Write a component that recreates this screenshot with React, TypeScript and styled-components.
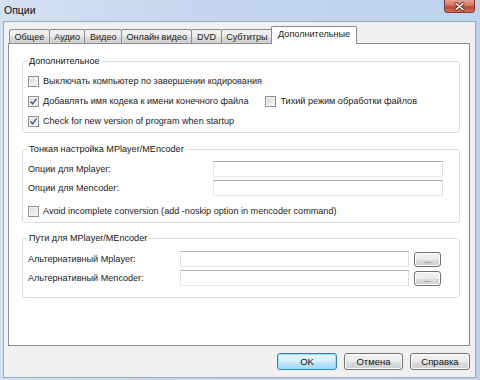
import styled, { createGlobalStyle } from 'styled-components'

const uiFont = '"Liberation Sans", "DejaVu Sans", sans-serif'
const textSize = '9.1px'

const GlobalStyle = createGlobalStyle`
  html, body {
    margin: 0;
    padding: 0;
    background: #bcd3ec;
  }
  body {
    font-family: ${uiFont};
    font-size: ${textSize};
    color: #1b1b1b;
  }
`

const Window = styled.div`
  width: 480px;
  height: 380px;
  display: flex;
  flex-direction: column;
  background: linear-gradient(90deg, #d3e1f2 0%, #c4d7ee 40%, #bdd3ec 100%);
  box-sizing: border-box;
  overflow: hidden;
`

const TitleBar = styled.div`
  height: 21px;
  display: flex;
  align-items: flex-start;
  justify-content: space-between;
  padding: 0 5px 0 4px;
`

const Title = styled.div`
  margin-top: 4px;
  font-size: 10.5px;
  color: #0d0d0d;
`

const CloseButton = styled.div`
  width: 31px;
  height: 13px;
  border: 1px solid #7a3a36;
  border-top: none;
  border-radius: 0 0 4px 4px;
  background: linear-gradient(#e4a293 0%, #d7765f 45%, #c04a33 55%, #d0705a 100%);
  display: flex;
  align-items: center;
  justify-content: center;
  box-sizing: border-box;
`

const Client = styled.div`
  flex: 1;
  margin: 0 4px 2px 3px;
  background: #f0f0f0;
  border: 1px solid #9aaabd;
  display: flex;
  flex-direction: column;
  padding: 4px 5px 0 4px;
`

const TabStrip = styled.div`
  display: flex;
  align-items: flex-end;
  height: 18px;
  padding-left: 1px;
  position: relative;
  z-index: 1;
  margin-bottom: -1px;
`

const Tab = styled.div<{ active?: boolean }>`
  height: ${(p) => (p.active ? '18px' : '15px')};
  padding: 0 ${(p) => (p.active ? '6px' : '4.5px')};
  padding-top: ${(p) => (p.active ? '2px' : '0')};
  box-sizing: border-box;
  border: 1px solid #898c95;
  border-bottom: ${(p) => (p.active ? 'none' : '1px solid #898c95')};
  margin-left: ${(p) => (p.active ? '-2px' : '-1px')};
  background: ${(p) =>
    p.active
      ? '#ffffff'
      : 'linear-gradient(#f3f3f3 0%, #ebebeb 50%, #dddddd 51%, #cfcfcf 100%)'};
  border-radius: 2px 2px 0 0;
  display: flex;
  align-items: ${(p) => (p.active ? 'flex-start' : 'center')};
  white-space: nowrap;
  position: relative;
  z-index: ${(p) => (p.active ? 2 : 1)};
  &:first-child {
    margin-left: 0;
  }
`

const Panel = styled.div`
  height: 303px;
  box-sizing: border-box;
  background: #ffffff;
  border: 1px solid #898c95;
  padding: 17px 9px 0 13px;
  display: flex;
  flex-direction: column;
`

const Group = styled.div<{ top?: number }>`
  position: relative;
  border: 1px solid #d5dfe5;
  border-radius: 3px;
  margin-top: ${(p) => p.top ?? 0}px;
  padding: 0 16px 0 5px;
  box-shadow: inset 1px 1px 0 #ffffff;
`

const GroupBody = styled.div<{ pad: string }>`
  padding: ${(p) => p.pad};
`

const Legend = styled.span`
  position: absolute;
  top: -7px;
  left: 4px;
  padding: 0 2px;
  background: #ffffff;
  line-height: 12px;
  color: #151515;
`

const CheckRow = styled.div<{ top?: number }>`
  height: 20px;
  display: flex;
  align-items: center;
  margin-top: ${(p) => p.top ?? 0}px;
`

const CheckItem = styled.label<{ indent?: number }>`
  display: flex;
  align-items: center;
  gap: 4px;
  margin-left: ${(p) => p.indent ?? 0}px;
  white-space: nowrap;
`

const Box = styled.span`
  width: 11px;
  height: 11px;
  box-sizing: border-box;
  border: 1px solid #8e8f8f;
  background: linear-gradient(135deg, #dcdcdc 0%, #f4f4f4 100%);
  box-shadow: inset 0 0 0 1px #f4f4f4;
  display: flex;
  align-items: center;
  justify-content: center;
`

const FieldRow = styled.div<{ labelWidth: number }>`
  height: 16px;
  display: grid;
  grid-template-columns: ${(p) => p.labelWidth}px 1fr;
  align-items: center;
  & + & {
    margin-top: 3px;
  }
`

const PathRow = styled.div<{ labelWidth: number }>`
  height: 16px;
  display: grid;
  grid-template-columns: ${(p) => p.labelWidth}px 1fr 27px;
  align-items: center;
  & + & {
    margin-top: 3px;
  }
`

const Input = styled.div<{ gapRight?: number }>`
  height: 16px;
  box-sizing: border-box;
  border: 1px solid #abadb3;
  border-color: #abadb3 #dbdfe6 #e3e9ef #e2e3ea;
  background: #ffffff;
  margin-right: ${(p) => p.gapRight ?? 0}px;
`

const SmallButton = styled.div`
  height: 15px;
  box-sizing: border-box;
  border: 1px solid #707070;
  border-radius: 3px;
  background: linear-gradient(#f2f2f2 0%, #ebebeb 50%, #dddddd 51%, #cfcfcf 100%);
  box-shadow: inset 0 0 0 1px #fcfcfc;
  display: flex;
  align-items: flex-end;
  justify-content: center;
  font-size: 8px;
  line-height: 10px;
  color: #333;
`

const ButtonBar = styled.div`
  display: flex;
  justify-content: flex-end;
  padding-top: 7px;
  gap: 7px;
`

const DialogButton = styled.div<{ primary?: boolean; width: number }>`
  width: ${(p) => p.width}px;
  height: 17px;
  box-sizing: border-box;
  border: 1px solid ${(p) => (p.primary ? '#3c7fb1' : '#707070')};
  border-radius: 3px;
  background: ${(p) =>
    p.primary
      ? 'linear-gradient(#eaf6fd 0%, #d9f0fc 50%, #bee6fd 51%, #a7d9f5 100%)'
      : 'linear-gradient(#f2f2f2 0%, #ebebeb 50%, #dddddd 51%, #cfcfcf 100%)'};
  box-shadow: inset 0 0 0 1px ${(p) => (p.primary ? '#8ee3fb' : '#fcfcfc')};
  display: flex;
  align-items: center;
  justify-content: center;
  color: #111;
  font-size: 9.5px;
`

function Check({ checked }: { checked?: boolean }) {
  return (
    <Box>
      {checked ? (
        <svg width="9" height="9" viewBox="0 0 9 9">
          <path
            d="M1.5 4.6 L3.6 6.8 L7.6 1.6"
            fill="none"
            stroke="#4a5f97"
            strokeWidth="1.5"
          />
        </svg>
      ) : null}
    </Box>
  )
}

const tabs = ['Общее', 'Аудио', 'Видео', 'Онлайн видео', 'DVD', 'Субтитры']

export default function App() {
  return (
    <Window>
      <GlobalStyle />
      <TitleBar>
        <Title>Опции</Title>
        <CloseButton>
          <svg width="11" height="9" viewBox="0 0 11 9">
            <path
              d="M2 1.5 L9 7.5 M9 1.5 L2 7.5"
              stroke="#5a2a22"
              strokeWidth="3"
              strokeLinecap="round"
            />
            <path
              d="M2 1.5 L9 7.5 M9 1.5 L2 7.5"
              stroke="#ffffff"
              strokeWidth="1.6"
              strokeLinecap="round"
            />
          </svg>
        </CloseButton>
      </TitleBar>
      <Client>
        <TabStrip>
          {tabs.map((t) => (
            <Tab key={t}>{t}</Tab>
          ))}
          <Tab active>Дополнительные</Tab>
        </TabStrip>
        <Panel>
          <Group>
            <Legend>Дополнительное</Legend>
            <GroupBody pad="9px 0 1px">
              <CheckRow>
                <CheckItem>
                  <Check />
                  Выключать компьютер по завершении кодирования
                </CheckItem>
              </CheckRow>
              <CheckRow>
                <CheckItem>
                  <Check checked />
                  Добавлять имя кодека к имени конечного файла
                </CheckItem>
                <CheckItem indent={17}>
                  <Check />
                  Тихий режим обработки файлов
                </CheckItem>
              </CheckRow>
              <CheckRow>
                <CheckItem>
                  <Check checked />
                  Check for new version of program when startup
                </CheckItem>
              </CheckRow>
            </GroupBody>
          </Group>
          <Group top={16}>
            <Legend>Тонкая настройка MPlayer/MEncoder</Legend>
            <GroupBody pad="11px 0 1px">
              <FieldRow labelWidth={185}>
                <span>Опции для Mplayer:</span>
                <Input />
              </FieldRow>
              <FieldRow labelWidth={185}>
                <span>Опции для Mencoder:</span>
                <Input />
              </FieldRow>
              <CheckRow top={5}>
                <CheckItem>
                  <Check />
                  Avoid incomplete conversion (add -noskip option in mencoder command)
                </CheckItem>
              </CheckRow>
            </GroupBody>
          </Group>
          <Group top={15}>
            <Legend>Пути для MPlayer/MEncoder</Legend>
            <GroupBody pad="12px 2px 11px 0">
              <PathRow labelWidth={152}>
                <span>Альтернативный Mplayer:</span>
                <Input gapRight={5} />
                <SmallButton>...</SmallButton>
              </PathRow>
              <PathRow labelWidth={152}>
                <span>Альтернативный Mencoder:</span>
                <Input gapRight={5} />
                <SmallButton>...</SmallButton>
              </PathRow>
            </GroupBody>
          </Group>
        </Panel>
        <ButtonBar>
          <DialogButton primary width={60}>
            OK
          </DialogButton>
          <DialogButton width={59}>Отмена</DialogButton>
          <DialogButton width={60}>Справка</DialogButton>
        </ButtonBar>
      </Client>
    </Window>
  )
}
